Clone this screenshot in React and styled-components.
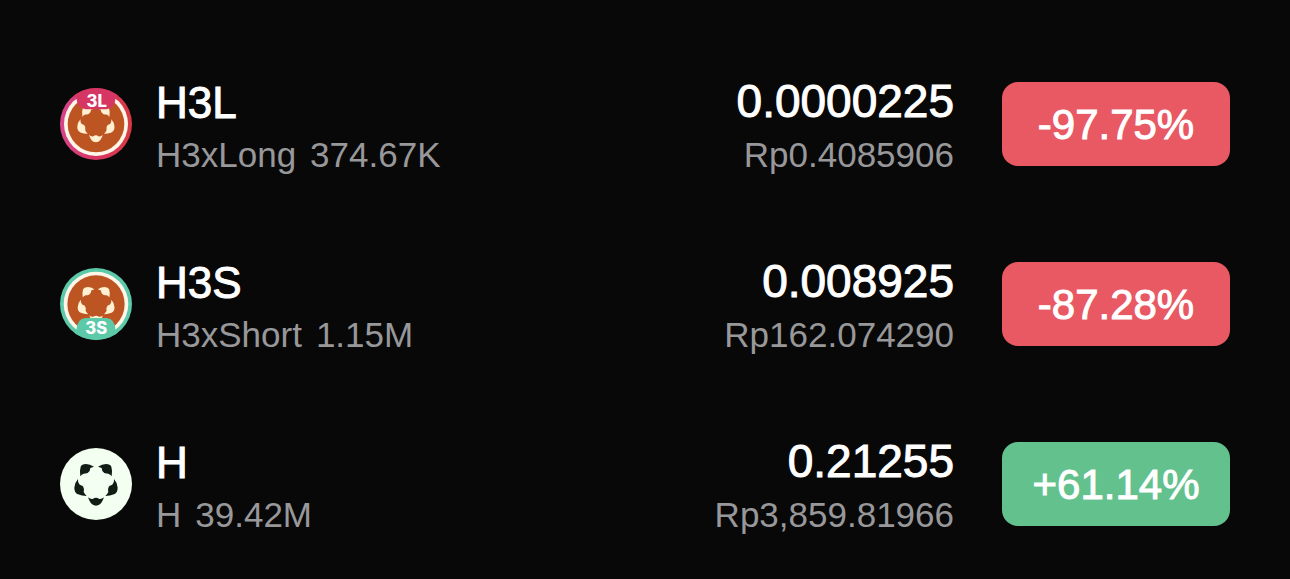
import React from "react";
import styled, { createGlobalStyle } from "styled-components";

const GlobalStyle = createGlobalStyle`
  *, *::before, *::after { box-sizing: border-box; }
  body {
    margin: 0;
    background: #080808;
    color: #ffffff;
    font-family: "Liberation Sans", Arial, sans-serif;
  }
`;

const List = styled.ul`
  display: flex;
  flex-direction: column;
  gap: 68px;
  min-height: 100vh;
  margin: 0;
  padding: 68px 60px 36px;
  list-style: none;
`;

const Row = styled.li`
  display: flex;
  align-items: center;
  gap: 48px;
`;

const Asset = styled.div`
  display: flex;
  flex: 1;
  align-items: center;
  gap: 24px;
  min-width: 0;
`;

const Coin = styled.svg`
  flex: none;
  width: 72px;
  height: 72px;
`;

const CoinLabel = styled.text`
  font-family: Inter, sans-serif;
  font-size: 50px;
  font-weight: 800;
  text-anchor: middle;
  fill: #ffffff;
`;

const Stack = styled.div`
  display: flex;
  flex-direction: column;
  align-items: flex-start;
  white-space: nowrap;
`;

const PriceStack = styled(Stack)`
  align-items: flex-end;
  padding-bottom: 4px;
`;

const Symbol = styled.span`
  font-size: 44px;
  line-height: 62px;
  -webkit-text-stroke: 1px currentColor;
`;

const Price = styled.span`
  font-size: 46px;
  line-height: 66px;
  -webkit-text-stroke: 1px currentColor;
`;

const Detail = styled.span`
  display: flex;
  gap: 14px;
  color: #98989b;
  font-size: 35px;
  line-height: 42px;
`;

const Change = styled.span`
  display: flex;
  flex: none;
  align-items: center;
  justify-content: center;
  width: 228px;
  height: 84px;
  padding-top: 2px;
  border-radius: 16px;
  background: ${(p) => (p.$up ? "#63c18d" : "#e85963")};
  font-size: 42px;
  -webkit-text-stroke: 1px currentColor;
`;

function Bear({ fill }) {
  const ear =
    "M91 109 Q88 92 92 80 Q95 73 108 72 Q120 72 132 80 L121 84 Q121 94 113 99 Q106 101 101 101 Q95 103 91 109Z";
  const cheek =
    "M84 117 Q74 128 73 143 Q73 158 84 163 Q95 168 110 168 Q104 162 101 156 Q104 144 97 137 Q92 137 88 133 Q83 127 84 117Z";
  return (
    <g fill={fill}>
      <path d={ear} />
      <path d={cheek} />
      <g transform="translate(276 0) scale(-1 1)">
        <path d={ear} />
        <path d={cheek} />
      </g>
      <path d="M114 172 Q121 178 128 177 Q133 173 138 173 Q143 173 148 177 Q155 178 162 172 Q158 183 153 190 Q147 197 138 197 Q129 197 123 190 Q118 183 114 172Z" />
    </g>
  );
}

function LongCoin() {
  return (
    <Coin viewBox="30 24 216 216" aria-hidden="true">
      <defs>
        <linearGradient id="long-ring" x1="0" x2="1" y1="0" y2="0">
          <stop offset="0" stopColor="#d6458a" />
          <stop offset="0.5" stopColor="#d63562" />
          <stop offset="1" stopColor="#d83a42" />
        </linearGradient>
        <clipPath id="long-clip">
          <circle cx="138" cy="132" r="108" />
        </clipPath>
      </defs>
      <g clipPath="url(#long-clip)">
        <rect x="30" y="24" width="216" height="216" fill="url(#long-ring)" />
        <circle cx="138" cy="132" r="96" fill="#fff6ea" />
        <circle cx="138" cy="132" r="85" fill="#bd5522" />
        <g transform="translate(19 17) scale(0.86)">
          <Bear fill="#fff0d2" />
        </g>
        <path d="M70 24 H206 V46 L196 58 Q195 84 170 88 H106 Q81 84 80 58 L70 46Z" fill="#d63664" />
        <CoinLabel x="140" y="80">3L</CoinLabel>
      </g>
    </Coin>
  );
}

function ShortCoin() {
  return (
    <Coin viewBox="30 24 216 216" aria-hidden="true">
      <defs>
        <clipPath id="short-clip">
          <circle cx="138" cy="132" r="108" />
        </clipPath>
      </defs>
      <g clipPath="url(#short-clip)">
        <rect x="30" y="24" width="216" height="216" fill="#5cc9a9" />
        <circle cx="138" cy="132" r="97" fill="#fff6ea" />
        <circle cx="138" cy="132" r="86" fill="#bd5522" />
        <g transform="translate(21 20) scale(0.85)">
          <Bear fill="#fff0d2" />
        </g>
        <path d="M70 240 V222 L80 208 Q81 177 106 174 H170 Q195 177 196 208 L206 222 V240Z" fill="#5cc9a9" />
        <CoinLabel x="139" y="222">3S</CoinLabel>
      </g>
    </Coin>
  );
}

function BaseCoin() {
  return (
    <Coin viewBox="30 24 216 216" aria-hidden="true">
      <circle cx="138" cy="132" r="108" fill="#f3fff0" />
      <Bear fill="#101c14" />
    </Coin>
  );
}

const assets = [
  { symbol: "H3L", name: "H3xLong", volume: "374.67K", price: "0.0000225", fiat: "Rp0.4085906", change: "-97.75%", Icon: LongCoin },
  { symbol: "H3S", name: "H3xShort", volume: "1.15M", price: "0.008925", fiat: "Rp162.074290", change: "-87.28%", Icon: ShortCoin },
  { symbol: "H", name: "H", volume: "39.42M", price: "0.21255", fiat: "Rp3,859.81966", change: "+61.14%", Icon: BaseCoin },
];

export default function App() {
  return (
    <>
      <GlobalStyle />
      <List>
        {assets.map(({ symbol, name, volume, price, fiat, change, Icon }) => (
          <Row key={symbol}>
            <Asset>
              <Icon />
              <Stack>
                <Symbol>{symbol}</Symbol>
                <Detail>
                  <span>{name}</span>
                  <span>{volume}</span>
                </Detail>
              </Stack>
            </Asset>
            <PriceStack>
              <Price>{price}</Price>
              <Detail>{fiat}</Detail>
            </PriceStack>
            <Change $up={change.startsWith("+")}>{change}</Change>
          </Row>
        ))}
      </List>
    </>
  );
}
